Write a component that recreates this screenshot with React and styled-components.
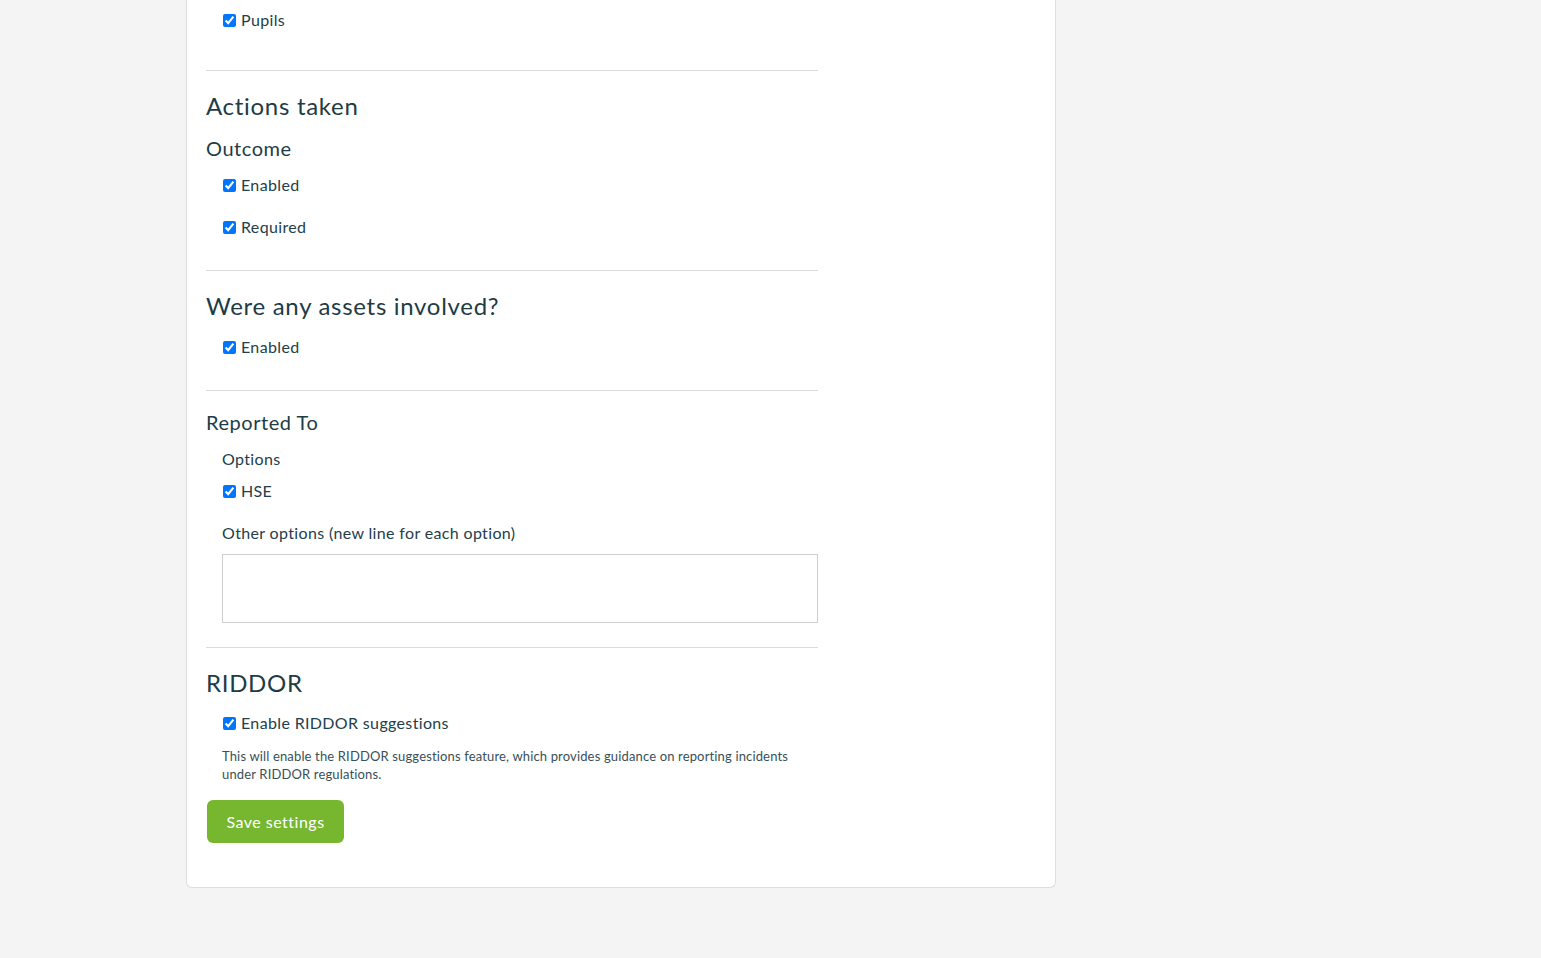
import React from "react";
import styled, { createGlobalStyle } from "styled-components";

const Global = createGlobalStyle`
  html, body { margin: 0; padding: 0; background: #f4f4f4; }
  body { font-family: Lato, "Open Sans", sans-serif; color: #1f3b45; }
`;

const Page = styled.div`
  padding: 0 0 70px 186px;
`;

const Card = styled.div`
  width: 870px;
  box-sizing: border-box;
  background: #fff;
  border: 1px solid #dedede;
  border-top: none;
  border-radius: 0 0 6px 6px;
  padding: 0 19px 44px 19px;
`;

const Content = styled.div`
  width: 612px;
`;

const Section = styled.div`
  padding-top: ${(p) => p.$top ?? 20}px;
  padding-bottom: ${(p) => p.$bottom ?? 31}px;
  border-bottom: ${(p) => (p.$last ? "none" : "1px solid #dcdcdc")};
`;

const H3 = styled.h3`
  margin: 0 0 ${(p) => p.$mb ?? 15}px;
  font-size: 24px;
  line-height: 29px;
  font-weight: 400;
  letter-spacing: 0.7px;
  color: #1d3c46;
`;

const H4 = styled.h4`
  margin: 0 0 ${(p) => p.$mb ?? 12}px;
  font-size: 20px;
  line-height: 24px;
  font-weight: 400;
  letter-spacing: 0.55px;
  color: #1d3c46;
`;

const CheckRow = styled.label`
  display: flex;
  align-items: center;
  margin-left: 16px;
  margin-bottom: ${(p) => p.$mb ?? 0}px;
  font-size: 16px;
  line-height: 24px;
  letter-spacing: 0.35px;
  color: #23404a;
`;

const Box = styled.input`
  width: 13px;
  height: 13px;
  margin: 0 5px 0 1px;
`;

const Label = styled.div`
  margin-left: 16px;
  margin-bottom: ${(p) => p.$mb ?? 8}px;
  font-size: 16px;
  line-height: 24px;
  letter-spacing: 0.35px;
  color: #23404a;
`;

const TextArea = styled.textarea`
  display: block;
  margin-left: 16px;
  width: 596px;
  height: 69px;
  box-sizing: border-box;
  border: 1px solid #cfcfcf;
  resize: none;
  font-family: inherit;
`;

const Help = styled.p`
  margin: 12px 20px 17px 16px;
  font-size: 13px;
  line-height: 18px;
  letter-spacing: 0.15px;
  color: #3a4f57;
`;

const SaveButton = styled.button`
  display: block;
  margin-left: 1px;
  width: 137px;
  height: 43px;
  border: none;
  border-radius: 6px;
  background: #76b72f;
  color: #fff;
  font-family: inherit;
  font-size: 16px;
  letter-spacing: 0.5px;
  cursor: pointer;
`;

const Check = ({ children, mb }) => (
  <CheckRow $mb={mb}>
    <Box type="checkbox" defaultChecked />
    {children}
  </CheckRow>
);

export default function App() {
  return (
    <>
      <Global />
      <Page>
        <Card>
          <Content>
            <Section $top={8} $bottom={38}>
              <Check>Pupils</Check>
            </Section>
            <Section>
              <H3 $mb={16}>Actions taken</H3>
              <H4 $mb={13}>Outcome</H4>
              <Check mb={18}>Enabled</Check>
              <Check>Required</Check>
            </Section>
            <Section>
              <H3 $mb={15}>Were any assets involved?</H3>
              <Check>Enabled</Check>
            </Section>
            <Section $top={19} $bottom={24}>
              <H4 $mb={13}>Reported To</H4>
              <Label>Options</Label>
              <Check mb={18}>HSE</Check>
              <Label $mb={9}>Other options (new line for each option)</Label>
              <TextArea />
            </Section>
            <Section $last $bottom={0}>
              <H3 $mb={14}>RIDDOR</H3>
              <Check>Enable RIDDOR suggestions</Check>
              <Help>
                This will enable the RIDDOR suggestions feature, which provides guidance on reporting incidents under RIDDOR regulations.
              </Help>
              <SaveButton>Save settings</SaveButton>
            </Section>
          </Content>
        </Card>
      </Page>
    </>
  );
}
